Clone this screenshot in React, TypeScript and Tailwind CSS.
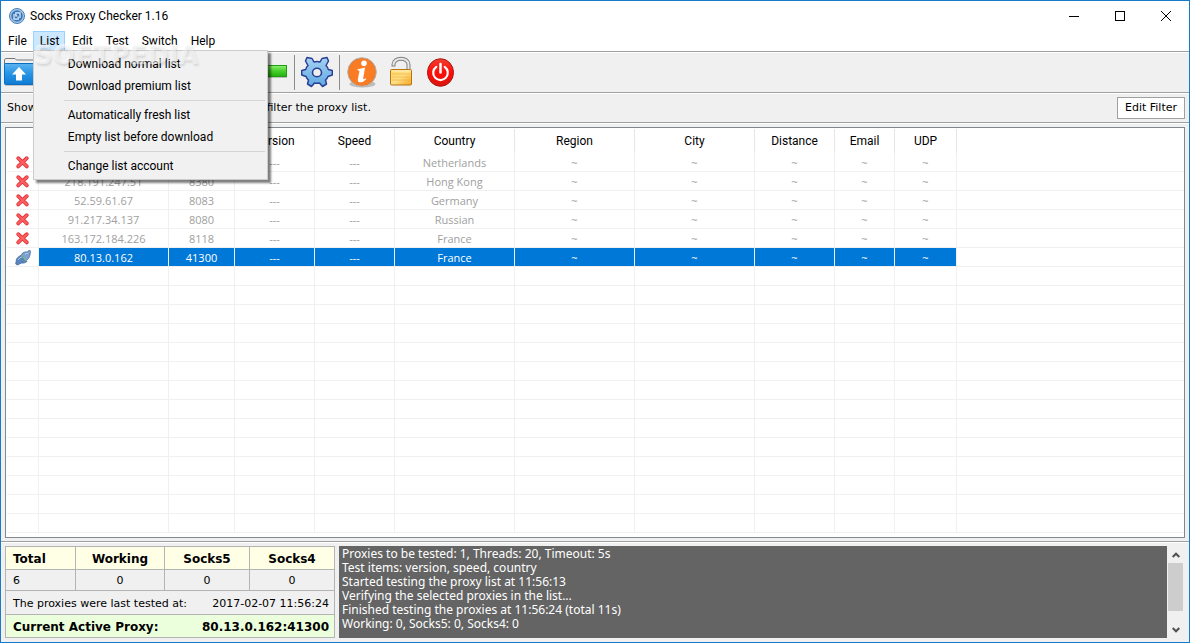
import type { ReactNode } from "react";
import { Clipboard, Copy, Plus, RefreshCw, Save } from "lucide-react";
import { clsx } from "clsx";

interface Proxy {
  ip: string;
  port: string;
  country: string;
  active?: boolean;
}

const proxies: Proxy[] = [
  { ip: "89.38.150.97", port: "1080", country: "Netherlands" },
  { ip: "218.191.247.51", port: "8380", country: "Hong Kong" },
  { ip: "52.59.61.67", port: "8083", country: "Germany" },
  { ip: "91.217.34.137", port: "8080", country: "Russian" },
  { ip: "163.172.184.226", port: "8118", country: "France" },
  { ip: "80.13.0.162", port: "41300", country: "France", active: true },
];

const columns = [
  { title: "", width: "w-[32px]" },
  { title: "IP", width: "w-[130px]" },
  { title: "Port", width: "w-[66px]" },
  { title: "Version", width: "w-[80px]" },
  { title: "Speed", width: "w-[80px]" },
  { title: "Country", width: "w-[120px]" },
  { title: "Region", width: "w-[120px]" },
  { title: "City", width: "w-[120px]" },
  { title: "Distance", width: "w-[80px]" },
  { title: "Email", width: "w-[60px]" },
  { title: "UDP", width: "w-[62px]" },
];

const EMPTY_ROWS = 14;

const menus = ["File", "List", "Edit", "Test", "Switch", "Help"];

const listMenu = [
  ["Download normal list", "Download premium list"],
  ["Automatically fresh list", "Empty list before download"],
  ["Change list account"],
];

const log = [
  "Proxies to be tested: 1, Threads: 20, Timeout: 5s",
  "Test items: version, speed, country",
  "Started testing the proxy list at 11:56:13",
  "Verifying the selected proxies in the list...",
  "Finished testing the proxies at 11:56:24 (total 11s)",
  "Working: 0, Socks5: 0, Socks4: 0",
].join("\n");

const AppIcon = () => (
  <svg className="h-4 w-4" viewBox="0 0 16 16">
    <circle cx="8" cy="8" r="7.5" fill="#a9c9ea" stroke="#4a7fb8" />
    <circle cx="8" cy="8" r="5.8" fill="#3c78b8" />
    <path d="M5 6v5.200h4.200V8.500M11 10V4.800H6.800v3h1.400" fill="none" stroke="#e4f1fc" strokeWidth="1.200" />
  </svg>
);

const FolderIcon = () => (
  <svg className="h-8 w-8" viewBox="0 0 32 32">
    <defs>
      <linearGradient id="folder" x1="0" y1="0" x2="0" y2="1">
        <stop offset="0" stopColor="#5cb4f0" />
        <stop offset="0.5" stopColor="#2593e4" />
        <stop offset="1" stopColor="#0f7bd2" />
      </linearGradient>
    </defs>
    <path d="M0.500 8V3.500L2 2.500h9l1.500 1.500H31.500V8z" fill="#efefef" stroke="#777" />
    <rect x="0.500" y="7.500" width="31" height="21" rx="1" fill="url(#folder)" stroke="#0a6fc0" />
    <path d="M1 29.500h30" stroke="#c4c4c4" />
    <path d="M15 11l7 7.500h-4v6h-6v-6H8z" fill="#fff" />
  </svg>
);

const MinusIcon = () => (
  <svg className="h-8 w-8" viewBox="0 0 32 32">
    <defs>
      <linearGradient id="minus" x1="0" y1="0" x2="0" y2="1">
        <stop offset="0" stopColor="#8df070" />
        <stop offset="0.5" stopColor="#47cf2e" />
        <stop offset="1" stopColor="#22b00c" />
      </linearGradient>
    </defs>
    <rect x="1.500" y="9.500" width="29" height="11" fill="url(#minus)" stroke="#1f9f12" />
    <path d="M1 21.500h30" stroke="#bdbdbd" />
  </svg>
);

const GearIcon = () => (
  <svg className="h-8 w-8" viewBox="0 0 32 32">
    <defs>
      <linearGradient id="gear" x1="0" y1="0" x2="0" y2="1">
        <stop offset="0" stopColor="#a5d2f3" />
        <stop offset="1" stopColor="#5fa8e2" />
      </linearGradient>
    </defs>
    <path
      d="M6 1.500L11 2.500L13 6Q16 4.800 19 6L21 2.500L26 1.500L27.500 5L25 9.500Q27 11.500 27.300 13.500L31.300 14.500V19L27 20.500Q26.300 22.500 24.500 24L25.500 28L21.500 30.500L18.500 27Q16 27.600 13.500 27L10.500 30.500L6.500 28L7.500 24Q5.700 22.500 5 20.500L0.700 19V14.500L4.700 13.500Q5 11.500 7 9.500L4.500 5Z"
      fill="url(#gear)"
      stroke="#2b3f93"
      strokeWidth="1.500"
      strokeLinejoin="round"
    />
    <ellipse cx="16" cy="16.500" rx="4.500" ry="4.300" fill="#efefef" stroke="#2b3f93" strokeWidth="1.600" />
  </svg>
);

const InfoIcon = () => (
  <svg className="h-8 w-8" viewBox="0 0 32 32">
    <defs>
      <radialGradient id="info" cx="0.5" cy="0.5" r="0.55">
        <stop offset="0" stopColor="#ff7d22" />
        <stop offset="0.8" stopColor="#f77c25" />
        <stop offset="1" stopColor="#e26a17" />
      </radialGradient>
    </defs>
    <ellipse cx="16.500" cy="28" rx="13" ry="3.500" fill="#bdbdbd" />
    <circle cx="16" cy="16" r="14.300" fill="url(#info)" stroke="#b9b1aa" strokeWidth="1" />
    <circle cx="18" cy="7.200" r="2.800" fill="#fff" />
    <path
      d="M11.500 13.200Q15 12.800 19 11.600L17.200 22.500Q17.100 24.200 19.800 22.300L20.200 23.200Q17 26.800 13.600 26.300Q11.400 25.800 11.900 23L13.400 15.300Q13.400 14.300 11.500 14.300Z"
      fill="#fff"
    />
  </svg>
);

const LockIcon = () => (
  <svg className="h-8 w-8" viewBox="0 0 32 32">
    <defs>
      <linearGradient id="lock" x1="0" y1="0" x2="1" y2="1">
        <stop offset="0" stopColor="#ffd768" />
        <stop offset="0.5" stopColor="#ffdf88" />
        <stop offset="1" stopColor="#f5a51e" />
      </linearGradient>
    </defs>
    <path d="M8.500 10.500V8.500A7.500 5.800 0 0 1 23.500 8.500V13" fill="none" stroke="#808080" strokeWidth="4" />
    <path d="M8.500 9.500V8.500A7.500 5.800 0 0 1 23.500 8.500V13" fill="none" stroke="#e8e8e8" strokeWidth="2" />
    <rect x="5.500" y="13.500" width="21" height="15.500" rx="1" fill="url(#lock)" stroke="#b67512" />
    <path d="M7 18h18M7 21h18M7 24h18" stroke="#f0aa2c" strokeOpacity="0.6" />
    <path d="M7 15h18" stroke="#fff0bd" />
  </svg>
);

const PowerIcon = () => (
  <svg className="h-8 w-8" viewBox="0 0 32 32">
    <defs>
      <linearGradient id="power" x1="0" y1="0" x2="0" y2="1">
        <stop offset="0" stopColor="#f0402e" />
        <stop offset="0.5" stopColor="#ff0c08" />
        <stop offset="1" stopColor="#d8160c" />
      </linearGradient>
    </defs>
    <ellipse cx="16.500" cy="16.500" rx="13" ry="13.800" fill="url(#power)" stroke="#a81510" />
    <path d="M12.300 10.800A7.300 7.300 0 1 0 20.700 10.800" fill="none" stroke="#fff" strokeWidth="2.200" strokeLinecap="round" />
    <path d="M16.500 8v8.500" stroke="#fff" strokeWidth="2.500" strokeLinecap="round" />
  </svg>
);

const CrossIcon = () => (
  <svg className="mx-auto h-4 w-4" viewBox="0 0 16 16">
    <path d="M3.200 3.200l8.600 8.200M11.800 3.200l-8.600 8.200" stroke="#e02c32" strokeWidth="3.800" strokeLinecap="round" />
    <path d="M3.200 3.200l8.600 8.200M11.800 3.200l-8.600 8.200" stroke="#fb5f62" strokeWidth="2.200" strokeLinecap="round" />
  </svg>
);

const PlugIcon = () => (
  <svg className="mx-auto h-4 w-4" viewBox="0 0.500 16 16">
    <path d="M0.700 14.500L1.500 9.500Q3.500 6.500 6.500 5.500L8 6.500L12 12Q9 14.200 6.500 13.500L2.500 15.500Z" fill="#5b86bd" stroke="#3b639c" strokeWidth="0.7" />
    <path d="M6.500 4.500Q9 1.800 12 2.500L14.500 0.500L15.500 1.500L15 5.500Q14.500 9 11.500 11L9.500 9.500Z" fill="#7ba2d1" stroke="#44699c" strokeWidth="0.7" />
    <path d="M6.800 5.500l4.500 6" stroke="#8dc07f" strokeWidth="1.200" />
    <path d="M3 10.500q2-3 4-3M10 4.500q2-1 3-0.500" fill="none" stroke="#b9d0ea" strokeWidth="0.9" />
  </svg>
);

const ToolButton = ({ label, children }: { label: string; children: ReactNode }) => (
  <button type="button" aria-label={label} className="flex h-8 w-8 shrink-0 items-center justify-center">
    {children}
  </button>
);

const Divider = () => <div className="h-[35px] w-px bg-[#8c8c8c]" />;

const TitleBar = () => (
  <header className="flex h-[30px] items-center bg-white pl-2">
    <AppIcon />
    <h1 className="ml-[5px] flex-1 text-[12px] leading-4">Socks Proxy Checker 1.16</h1>
    <button type="button" aria-label="Minimize" className="flex h-full w-[46px] items-center justify-center">
      <svg className="h-[10px] w-[10px]" viewBox="0 0 10 10">
        <path d="M0 5.500h10" stroke="#000" />
      </svg>
    </button>
    <button type="button" aria-label="Maximize" className="flex h-full w-[46px] items-center justify-center">
      <svg className="h-[10px] w-[10px]" viewBox="0 0 10 10">
        <rect x="0.5" y="0.5" width="9" height="9" fill="none" stroke="#000" />
      </svg>
    </button>
    <button type="button" aria-label="Close" className="flex h-full w-[46px] items-center justify-center">
      <svg className="h-[10px] w-[10px]" viewBox="0 0 10 10">
        <path d="M0 0l10 10M10 0L0 10" stroke="#000" />
      </svg>
    </button>
  </header>
);

const ListMenu = () => (
  <div
    role="menu"
    className="absolute top-[19px] left-0 z-10 w-[235px] border border-[#ccc] bg-[#f1f1f1] py-0.5 pr-0.5 shadow-[3px_3px_2px_rgba(0,0,0,0.5)]"
  >
    {listMenu.map((group, i) => (
      <div key={i} role="group">
        {i > 0 && <div role="separator" className="my-[3px] ml-[30px] h-px bg-[#d5d5d5]" />}
        {group.map((item) => (
          <button key={item} type="button" role="menuitem" className="block h-[22px] w-full pl-[34px] text-left">
            {item}
          </button>
        ))}
      </div>
    ))}
    <span
      aria-hidden="true"
      className="pointer-events-none absolute -top-3 left-0 font-['DejaVu_Sans'] text-[26px] leading-8 font-bold text-white/50 [text-shadow:1px_2px_2px_rgba(0,0,0,0.1)]"
    >
      SOFTPEDIA
    </span>
  </div>
);

const MenuBar = () => (
  <nav className="flex h-5 bg-white">
    {menus.map((name) => (
      <div key={name} className="relative">
        <button
          type="button"
          className={clsx("h-5 border pr-[5px] pl-1.5", name === "List" ? "border-[#99d1ff] bg-[#cce8ff]" : "border-transparent")}
        >
          {name}
        </button>
        {name === "List" && <ListMenu />}
      </div>
    ))}
  </nav>
);

const Toolbar = () => (
  <div className="flex items-center gap-1.5 border-t border-[#a0a0a0] pl-[3px] shadow-[inset_0_1px_0_#fff]">
    <div className="flex h-10 items-center gap-2.5">
      <ToolButton label="Load list">
        <FolderIcon />
      </ToolButton>
      <ToolButton label="Save list">
        <Save />
      </ToolButton>
      <ToolButton label="Refresh">
        <RefreshCw />
      </ToolButton>
      <ToolButton label="Copy">
        <Copy />
      </ToolButton>
      <ToolButton label="Paste">
        <Clipboard />
      </ToolButton>
      <ToolButton label="Add proxy">
        <Plus />
      </ToolButton>
      <ToolButton label="Remove proxy">
        <MinusIcon />
      </ToolButton>
    </div>
    <Divider />
    <ToolButton label="Settings">
      <GearIcon />
    </ToolButton>
    <Divider />
    <div className="flex items-center gap-[7px]">
      <ToolButton label="About">
        <InfoIcon />
      </ToolButton>
      <ToolButton label="Unlock">
        <LockIcon />
      </ToolButton>
      <ToolButton label="Exit">
        <PowerIcon />
      </ToolButton>
    </div>
  </div>
);

const FilterBar = () => (
  <div className="flex items-center justify-between border-y border-[#a0a0a0] pt-1 pr-1 pb-[3px] pl-1.5 font-['DejaVu_Sans'] text-[11px] shadow-[inset_0_1px_0_#fff,0_1px_0_#fff]">
    <p>Show all proxies here. Click the right button to filter the proxy list.</p>
    <button type="button" className="h-[22px] border border-[#a0a0a0] bg-white px-[7px]">
      Edit Filter
    </button>
  </div>
);

const ProxyTable = () => (
  <main className="mx-1 mt-1 min-h-0 flex-1 overflow-hidden border border-[#828790] bg-white pt-px pl-px">
    <table className="w-full table-fixed border-separate border-spacing-0 text-center">
      <colgroup>
        {columns.map((c) => (
          <col key={c.title} className={c.width} />
        ))}
        <col />
      </colgroup>
      <thead>
        <tr className="h-6">
          {columns.map((c, i) => (
            <th key={c.title} scope="col" className={clsx("p-0 font-normal", i > 0 && "border-r border-[#e5e5e5]")}>
              {c.title}
            </th>
          ))}
          <td />
        </tr>
      </thead>
      <tbody className="font-['Open_Sans'] text-[11px] leading-4">
        {proxies.map((p) => (
          <tr
            key={p.ip}
            className={clsx(
              "h-[19px] *:border-b *:border-[#f0f0f0] *:px-0 *:pt-0.5 *:pb-0 [&>td:not(:last-child)]:border-r",
              p.active ? "text-white [&>td:not(:first-child):not(:last-child)]:bg-[#0078d7] [&>td]:bg-clip-padding" : "text-[#a0a0a0]",
            )}
          >
            <td>{p.active ? <PlugIcon /> : <CrossIcon />}</td>
            <td>{p.ip}</td>
            <td>{p.port}</td>
            <td>---</td>
            <td>---</td>
            <td>{p.country}</td>
            <td>~</td>
            <td>~</td>
            <td>~</td>
            <td>~</td>
            <td>~</td>
            <td />
          </tr>
        ))}
        {Array.from({ length: EMPTY_ROWS }, (_, i) => (
          <tr key={i} className="h-[19px] *:border-b *:border-[#f0f0f0] *:p-0 [&>td:not(:last-child)]:border-r">
            {columns.map((c) => (
              <td key={c.title} />
            ))}
            <td />
          </tr>
        ))}
      </tbody>
    </table>
  </main>
);

const Stats = () => (
  <table className="w-[330px] shrink-0 table-fixed border-collapse border border-[#b4b4b4] font-['DejaVu_Sans'] text-[11px] leading-4 *:*:*:border *:*:*:border-[#b4b4b4] *:*:*:px-0 *:*:*:pt-0.5 *:*:*:pb-0">
    <colgroup>
      <col className="w-[70px]" />
      <col className="w-[89px]" />
      <col className="w-[85px]" />
      <col className="w-[85px]" />
    </colgroup>
    <thead>
      <tr className="h-[23px] bg-[#ffffe6] text-[12px]">
        <th scope="col" className="text-left">
          <span className="pl-[7px]">Total</span>
        </th>
        <th scope="col">Working</th>
        <th scope="col">Socks5</th>
        <th scope="col">Socks4</th>
      </tr>
    </thead>
    <tbody>
      <tr className="h-[21px] text-center">
        <td className="text-left">
          <span className="pl-[7px]">6</span>
        </td>
        <td>0</td>
        <td>0</td>
        <td>0</td>
      </tr>
      <tr className="h-6">
        <td colSpan={4}>
          <div className="flex justify-between pr-[5px] pl-[7px]">
            <span>The proxies were last tested at:</span>
            <time>2017-02-07 11:56:24</time>
          </div>
        </td>
      </tr>
      <tr className="h-[23px] bg-[#ebffdc] text-[12px] font-bold">
        <td colSpan={4}>
          <div className="flex justify-between pr-[5px] pl-[7px]">
            <span>Current Active Proxy:</span>
            <span>80.13.0.162:41300</span>
          </div>
        </td>
      </tr>
    </tbody>
  </table>
);

const LogPanel = () => (
  <div className="flex min-w-0 flex-1">
    <textarea
      readOnly
      aria-label="Log"
      value={log}
      className="min-w-0 flex-1 resize-none overflow-hidden bg-[#646464] px-[3px] pt-px font-['Noto_Sans'] text-[12px] leading-[14px] text-white outline-none"
    />
    <div className="ml-px flex w-[15px] flex-col bg-[#f0f0f0]">
      <button type="button" aria-label="Scroll up" className="flex h-[17px] items-center justify-center">
        <svg className="h-2 w-2" viewBox="0 0 8 8">
          <path d="M0.700 6L4 2.700L7.300 6" fill="none" stroke="#505050" strokeWidth="2" />
        </svg>
      </button>
      <div className="flex-1">
        <div className="h-5/6 bg-[#cdcdcd]" />
      </div>
      <button type="button" aria-label="Scroll down" className="flex h-[17px] items-center justify-center">
        <svg className="h-2 w-2" viewBox="0 0 8 8">
          <path d="M0.700 2L4 5.300L7.300 2" fill="none" stroke="#505050" strokeWidth="2" />
        </svg>
      </button>
    </div>
  </div>
);

export default function App() {
  return (
    <div className="flex h-screen flex-col overflow-hidden border border-[#1979ca] bg-[#f0f0f0] font-['Roboto','Open_Sans',sans-serif] text-[12px] leading-4 text-black">
      <TitleBar />
      <MenuBar />
      <Toolbar />
      <FilterBar />
      <ProxyTable />
      <footer className="mt-[3px] flex gap-1 border-t border-[#a0a0a0] py-1 pr-[6px] pl-1 shadow-[inset_0_1px_0_#fff]">
        <Stats />
        <LogPanel />
      </footer>
    </div>
  );
}
